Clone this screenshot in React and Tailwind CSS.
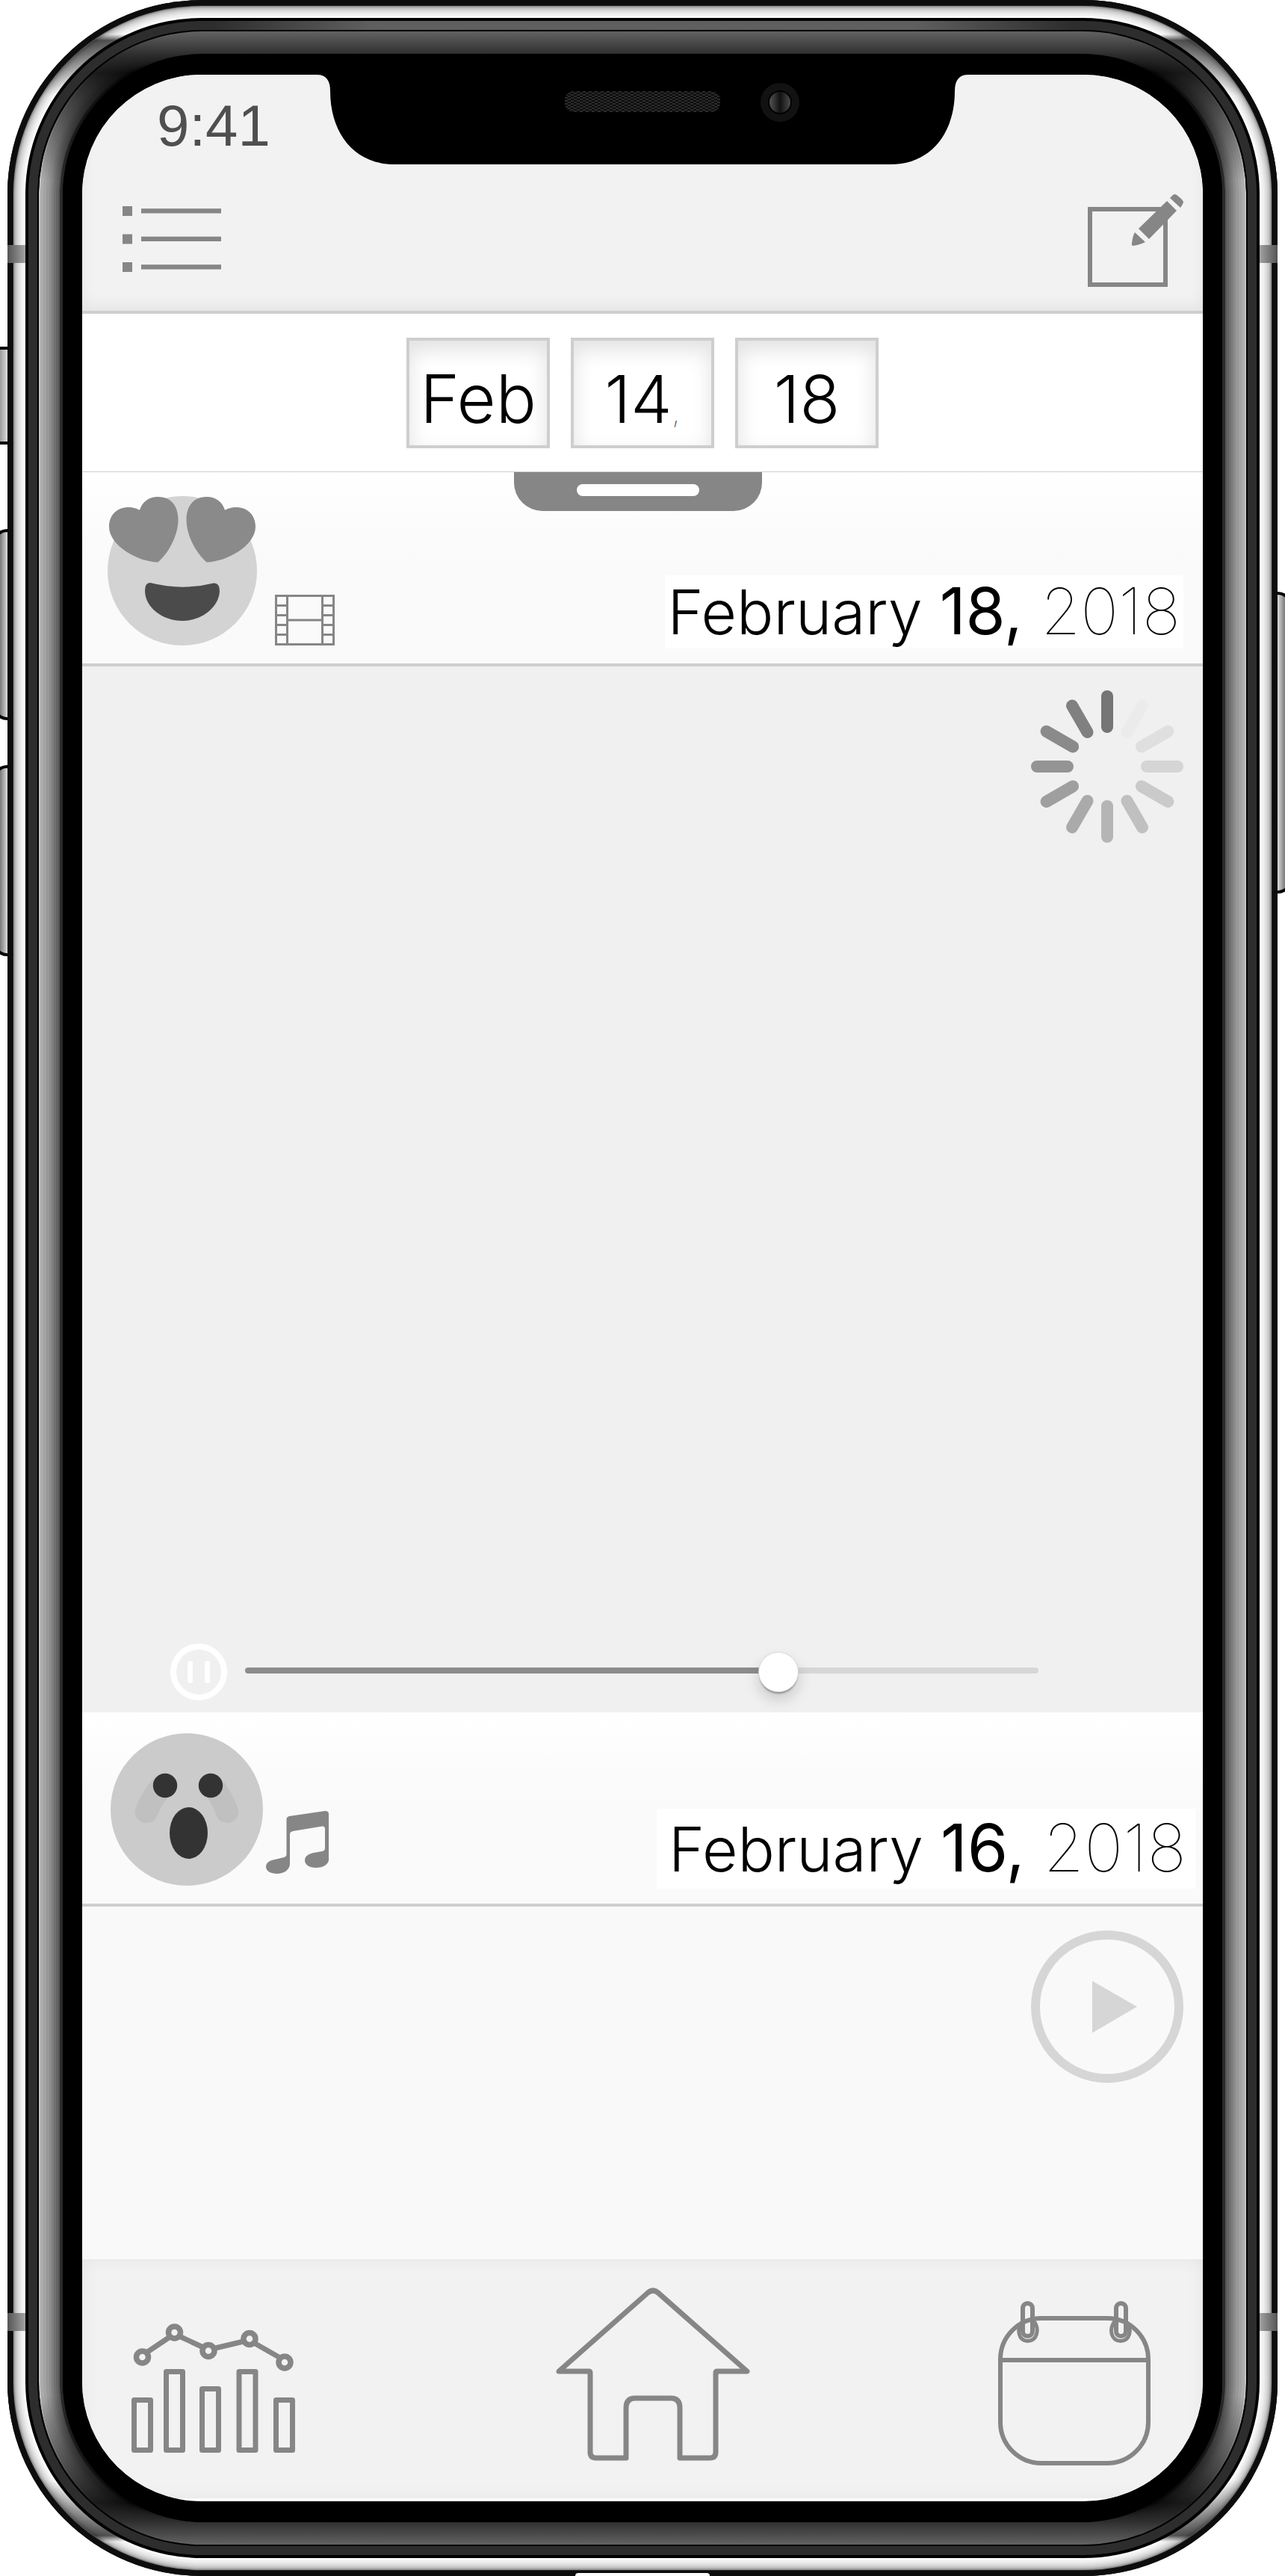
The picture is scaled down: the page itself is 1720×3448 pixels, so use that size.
const INK = "#868686";

function ListIcon() {
  return (
    <svg viewBox="0 0 132 88" className="block h-[88px] w-[132px]" fill={INK} aria-hidden="true">
      {[0, 37.5, 75].map((y) => (
        <g key={y}>
          <rect x="0" y={y} width="13" height="13" />
          <rect x="25" y={y + 3.2} width="107" height="6.3" />
        </g>
      ))}
    </svg>
  );
}

function ComposeIcon() {
  return (
    <svg viewBox="0 0 128 124" className="block h-[124px] w-[128px]" fill={INK} aria-hidden="true">
      <path d="M0 17H107V124H0ZM6 23V118H101V23Z" fillRule="evenodd" />
      <path d="M106 9L119 22L82 60L68 46Z" />
      <path d="M110 5L114 1Q116 -1 119 1Q126 6 128 10Q128 12 126 15L124 18Z" />
      <path d="M63 51L77 64Q72 67 61 69Q58 69 59 66Q60 56 63 51Z" />
    </svg>
  );
}

function HeartEyesFace() {
  return (
    <svg viewBox="0 0 200 200" className="block size-[200px]" role="img" aria-label="In love">
      <circle cx="100" cy="100" r="100" fill="#d3d3d3" />
      {["", "translate(200 0) scale(-1 1)"].map((t) => (
        <path
          key={t}
          transform={t}
          fill="#8a8a8a"
          d="M67.500 88.500C40 88 2 66 2 41C2 25 13 15 28 15C34 15 40 17 43 19C46 8 55 1 67.500 1C84 1 94.500 12 94.500 32C94.500 52 82 76 67.500 88.500Z"
        />
      ))}
      <path d="M57 116Q100 127 142 116.500Q150 116 150 127C149 149 126 167 100 167C74 167 50 149 50 127Q50 116 57 116Z" fill="#4b4b4b" />
    </svg>
  );
}

function ScaredFace() {
  return (
    <svg viewBox="0 0 204 204" className="block size-[204px]" role="img" aria-label="Scared">
      <circle cx="102" cy="102" r="102" fill="#cbcbcb" />
      <path d="M60 58Q42 76 33 102C31 112 39 120 48 120C55 120 60 116 62 111Q68 96 78 84Z" fill="#c0c0c0" />
      <path d="M147 60Q163 78 171 102C173 112 165 120 156 120C149 120 144 116 142 111Q137 96 128 84Z" fill="#c0c0c0" />
      <circle cx="73" cy="70" r="16.200" fill="#333" />
      <circle cx="134" cy="70" r="16.200" fill="#333" />
      <ellipse cx="104.500" cy="133.500" rx="25.500" ry="34.500" fill="#333" />
    </svg>
  );
}

function FilmIcon() {
  return (
    <svg viewBox="0 0 80 68" className="block h-[68px] w-[80px]" fill="none" stroke={INK} strokeWidth="3" role="img" aria-label="Video">
      <path d="M1.500 1.500H78.500V66.500H1.500ZM16.500 1V67M63.500 1V67M17 34H63" />
      {[14.5, 27.5, 40.5, 53.5].map((y) => (
        <path key={y} d={`M1 ${y}H16M64 ${y}H79`} />
      ))}
    </svg>
  );
}

function MusicIcon() {
  return (
    <svg viewBox="0 0 84 84" className="block size-[84px]" role="img" aria-label="Music">
      <path
        fill={INK}
        fillRule="evenodd"
        d="M31 7L79 0Q84 0 84 4V66C83 72 76 76 67 76C58 76 52 72 52 66C52 60 58 57 64 56L75 54Q79 53 79 50V24Q79 20 75 20.500L36 27Q32 28 32 31V72C31 79 24 84 15 84C6 84 0 80 0 75C0 69 5 66 12 65L24 62Q27.500 61 27.500 58V11Q27.500 8 31 7Z"
      />
    </svg>
  );
}

const SPOKES = ["#757575", "#ebebeb", "#dfdfdf", "#d5d5d5", "#cacaca", "#c0c0c0", "#b5b5b5", "#aaaaaa", "#9f9f9f", "#949494", "#8a8a8a", "#808080"];

function Spinner() {
  return (
    <svg viewBox="0 0 204 204" className="block size-[204px]" role="img" aria-label="Loading">
      {SPOKES.map((c, i) => (
        <rect key={c} x="94" y="0" width="16" height="57" rx="8" fill={c} transform={`rotate(${i * 30} 102 102)`} />
      ))}
    </svg>
  );
}

function PauseIcon() {
  return (
    <svg viewBox="0 0 76 76" className="block size-[76px]" aria-hidden="true">
      <circle cx="38" cy="38" r="34" fill="none" stroke="#fff" strokeWidth="8" />
      <rect x="23" y="23" width="7" height="30" rx="3.500" fill="#fff" />
      <rect x="46" y="23" width="7" height="30" rx="3.500" fill="#fff" />
    </svg>
  );
}

function PlayIcon() {
  return (
    <svg viewBox="0 0 204 204" className="block size-[204px]" aria-hidden="true">
      <circle cx="102" cy="102" r="96" fill="none" stroke="#d6d6d6" strokeWidth="12" />
      <path d="M82 67.500L142 102L82 137Z" fill="#d6d6d6" />
    </svg>
  );
}

function ChartIcon() {
  const bars = [
    [0, 99],
    [43, 61],
    [91, 84],
    [140.5, 61],
    [190, 99],
  ];
  const dots = [
    [14.5, 45],
    [57.5, 12],
    [103, 36.5],
    [158, 20.5],
    [205, 52],
  ];
  return (
    <svg viewBox="0 0 220 173" className="block h-[173px] w-[220px]" fill="none" stroke={INK} strokeWidth="7" aria-hidden="true">
      {bars.map(([x, y]) => (
        <rect key={x} x={x + 3.5} y={y + 3.5} width="22" height={166 - y} strokeLinejoin="round" />
      ))}
      {dots.map(([x, y]) => (
        <circle key={x} cx={x} cy={y} r="8" strokeWidth="7.500" />
      ))}
      <path d="M20 39L52 17.500M64 17L96 32M110 33.500L150 24M164 26L199 46" />
    </svg>
  );
}

function HomeIcon() {
  return (
    <svg viewBox="0 0 260 232" className="block h-[232px] w-[260px]" fill="none" stroke={INK} strokeWidth="7" strokeLinejoin="round" aria-hidden="true">
      <path d="M123 7Q130 1 137 7L256 112H216Q214 112 214 114V220Q214 228 206 228H166V161Q166 148 154 148H106Q94 148 94 161V228H54Q46 228 46 220V114Q46 112 44 112H4Z" />
    </svg>
  );
}

function CalendarIcon() {
  return (
    <svg viewBox="0 0 204 220" className="block h-[220px] w-[204px]" fill="none" stroke={INK} strokeWidth="6" aria-hidden="true">
      <rect x="3" y="23" width="198" height="194" rx="55" />
      <path d="M3 79H201" />
      <rect x="33" y="3" width="13" height="44" rx="6.500" />
      <rect x="158" y="3" width="13" height="44" rx="6.500" />
      <path d="M31 29C25 38 27 53 39.500 53.500C52 53 56 38 48 27" strokeWidth="5" />
      <path d="M156 27C148 38 151 53 164 53.500C177 53 179 38 173 29" strokeWidth="5" />
    </svg>
  );
}

/* Sensor housing with the ear speaker and the front camera. */
function Notch() {
  return (
    <svg viewBox="0 0 872 120" className="absolute top-0 left-1/2 h-[120px] w-[872px] -translate-x-1/2" aria-hidden="true">
      <defs>
        <pattern id="mesh" width="8" height="4" patternUnits="userSpaceOnUse">
          <rect width="8" height="4" fill="#0c0c0c" />
          <rect width="4" height="2" fill="#2b2b2b" />
          <rect x="4" y="2" width="4" height="2" fill="#2b2b2b" />
        </pattern>
        <linearGradient id="lens">
          <stop offset="0" stopColor="#555" />
          <stop offset=".5" stopColor="#111" />
          <stop offset="1" stopColor="#4a4a4a" />
        </linearGradient>
      </defs>
      <path d="M0 0C12 0 18 7 18 22C18 78 50 120 104 120H768C822 120 854 78 854 22C854 7 860 0 872 0Z" fill="#000" />
      <rect x="332" y="22" width="208" height="28" rx="12" fill="url(#mesh)" />
      <circle cx="620" cy="37" r="26" fill="#121212" />
      <circle cx="620" cy="37" r="16" fill="#000" />
      <circle cx="620" cy="37" r="14" fill="url(#lens)" />
    </svg>
  );
}

function DateBox({ label, className, children }) {
  return (
    <button
      type="button"
      aria-label={label}
      className={`flex h-[148px] w-48 items-center justify-center border-4 border-[#cecece] bg-white pt-4 leading-none font-light text-black shadow-[inset_0_12px_28px_rgba(0,0,0,0.12)] ${className}`}
    >
      {children}
    </button>
  );
}

function EntryHeader({ className, children }) {
  return (
    <header className={`flex h-[260px] shrink-0 items-end justify-between border-b-4 border-[#cecece] bg-linear-to-b from-white to-[#fafafa] to-45% ${className}`}>
      {children}
    </header>
  );
}

function EntryDate({ iso, day, year, className }) {
  return (
    <time dateTime={iso} className={`mb-5 bg-white whitespace-nowrap text-black ${className}`}>
      <span className="text-[82px] font-[350]">February </span>
      {day}, <span className="font-thin">{year}</span>
    </time>
  );
}

function SideButton({ className }) {
  return <div className={`absolute w-6 border-4 border-black ${className}`} />;
}

function Screen() {
  return (
    <div className="relative flex grow flex-col overflow-hidden rounded-[160px] bg-white pb-1">
      <header className="flex h-80 shrink-0 flex-col border-b-4 border-[#cecece] bg-[#f2f2f2] shadow-[inset_0_-6px_20px_rgba(0,0,0,0.06)]">
        <time className="pt-6 pl-[100px] font-['Liberation_Sans',sans-serif] text-[78px] leading-[88px] text-[#4f4f4f]">9:41</time>
        <div className="flex items-start justify-between pt-12 pr-[26px] pl-[54px]">
          <button type="button" aria-label="Menu" className="pt-4">
            <ListIcon />
          </button>
          <button type="button" aria-label="New entry">
            <ComposeIcon />
          </button>
        </div>
      </header>

      <section aria-label="Jump to date" className="flex h-[212px] shrink-0 justify-center gap-7 border-b border-[#cecece] pt-8">
        <DateBox label="Month" className="text-[90px]">
          Feb
        </DateBox>
        <DateBox label="Day" className="text-[88px]">
          <span>
            14<span className="text-[40px] font-thin">,</span>
          </span>
        </DateBox>
        <DateBox label="Year" className="text-[88px]">
          18
        </DateBox>
      </section>

      <main className="relative flex grow flex-col">
        <div className="absolute inset-x-0 top-0 flex justify-center pr-3">
          <button type="button" aria-label="Show more" className="flex h-[52px] w-[332px] justify-center rounded-b-[38px] bg-[#868686] pt-4">
            <span className="h-4 w-[164px] rounded-full bg-white" />
          </button>
        </div>

        <article className="flex grow flex-col">
          <EntryHeader className="pr-[26px] pl-[34px]">
            <div className="flex items-end gap-6 pb-6">
              <HeartEyesFace />
              <FilmIcon />
            </div>
            <EntryDate iso="2018-02-18" day="18" year="2018" className="pr-1 pl-1 text-[86px] leading-[96px]" />
          </EntryHeader>
          <div className="flex grow flex-col justify-between bg-[#f0f0f0] pt-8 pr-[26px] pb-4 pl-[118px]">
            <div className="self-end">
              <Spinner />
            </div>
            <div className="flex items-center gap-6 pr-[194px]">
              <button type="button" aria-label="Pause">
                <PauseIcon />
              </button>
              <input
                type="range"
                aria-label="Playback position"
                min="0"
                max="1000"
                defaultValue="681"
                className="mb-1 h-[52px] min-w-0 grow appearance-none bg-transparent [&::-webkit-slider-runnable-track]:h-2 [&::-webkit-slider-runnable-track]:rounded-full [&::-webkit-slider-runnable-track]:bg-[linear-gradient(to_right,#8c8c8c_68%,#d6d6d6_68%)] [&::-webkit-slider-thumb]:-mt-5 [&::-webkit-slider-thumb]:size-[52px] [&::-webkit-slider-thumb]:appearance-none [&::-webkit-slider-thumb]:rounded-full [&::-webkit-slider-thumb]:bg-white [&::-webkit-slider-thumb]:shadow-[0_0_0_1px_#d8d8d8,0_3px_2px_rgba(0,0,0,0.3),0_10px_20px_rgba(0,0,0,0.18)]"
              />
            </div>
          </div>
        </article>

        <article className="flex flex-col">
          <EntryHeader className="pr-[10px] pl-[38px]">
            <div className="flex items-end gap-1 pb-6">
              <ScaredFace />
              <div className="pb-4">
                <MusicIcon />
              </div>
            </div>
            <EntryDate iso="2018-02-16" day="16" year="2018" className="pr-3 pl-4 text-[88px] leading-[104px]" />
          </EntryHeader>
          <div className="flex h-[472px] items-start justify-end bg-[#f9f9f9] pt-8 pr-[26px]">
            <button type="button" aria-label="Play">
              <PlayIcon />
            </button>
          </div>
        </article>
      </main>

      <nav
        aria-label="Main"
        className="flex h-80 shrink-0 items-end justify-between bg-[#f2f2f2] pr-[70px] pl-[66px] shadow-[inset_0_0_24px_rgba(0,0,0,0.06)]"
      >
        <a href="#stats" aria-label="Statistics" className="pb-[61px]">
          <ChartIcon />
        </a>
        <a href="#home" aria-label="Home" className="pb-[50px] pl-4">
          <HomeIcon />
        </a>
        <a href="#calendar" aria-label="Calendar" className="pb-[44px]">
          <CalendarIcon />
        </a>
      </nav>

      <Notch />
    </div>
  );
}

export default function App() {
  return (
    <div className="relative flex min-h-screen flex-col overflow-hidden bg-white px-2.5 font-['Inter',sans-serif]">
      <SideButton className="top-[464px] -left-2.5 h-[131px] bg-linear-to-r from-[#777] to-[#ddd]" />
      <SideButton className="top-[708px] -left-2.5 h-64 rounded-l-[20px] bg-linear-to-r from-[#444] to-[#ddd]" />
      <SideButton className="top-[1024px] -left-2.5 h-64 rounded-l-[20px] bg-linear-to-r from-[#444] to-[#ddd]" />
      <SideButton className="top-[792px] -right-2.5 h-[404px] rounded-r-[20px] bg-linear-to-l from-[#444] to-[#ddd]" />

      {/* Polished outer band */}
      <div className="relative flex grow flex-col rounded-[260px] bg-white p-6 shadow-[inset_0_0_0_7px_#0d0d0d,inset_0_0_0_8px_#222,inset_0_0_0_10px_#999,inset_0_0_0_12px_#bdbdbd,inset_0_0_0_14px_#cfcfcf,inset_0_0_0_16px_#dcdcdc,inset_0_0_0_18px_#e6e6e6,inset_0_0_0_21px_#f0f0f0,inset_0_0_0_24px_#fbfbfb]">
        <div className="absolute inset-2 rounded-[252px] shadow-[inset_0_0_0_4px_rgba(60,60,60,0.55),inset_0_0_0_17px_rgba(50,50,50,0.85)] [mask-image:linear-gradient(to_bottom,transparent_38px,black_46px,transparent_120px,transparent_calc(100%-120px),black_calc(100%-46px),transparent_calc(100%-38px))]" />
        <div className="absolute inset-x-0 top-[328px] flex h-6 justify-between">
          <span className="w-[26px] bg-linear-to-r from-[#555] to-[#aaa]" />
          <span className="w-[26px] bg-linear-to-l from-[#555] to-[#aaa]" />
        </div>
        <div className="absolute inset-x-0 bottom-[328px] flex h-6 justify-between">
          <span className="w-[26px] bg-linear-to-r from-[#555] to-[#aaa]" />
          <span className="w-[26px] bg-linear-to-l from-[#555] to-[#aaa]" />
        </div>
        <div className="absolute bottom-0 left-1/2 h-1 w-[180px] -translate-x-1/2 rounded-t-sm bg-white" />

        <div className="relative flex grow flex-col rounded-[236px] bg-black p-1">
          <div className="flex grow flex-col rounded-[232px] bg-[#2d2d2d] bg-[linear-gradient(to_right,transparent_15%,#5f5f5f_28%,#5f5f5f_72%,transparent_85%)] bg-size-[100%_12px] bg-no-repeat p-3">
            <div className="flex grow flex-col rounded-[220px] bg-black p-0.5">
              <div className="relative flex grow flex-col overflow-hidden rounded-[218px] bg-[linear-gradient(to_bottom,#626262,#303030_30px,#000_56px,#000_calc(100%-56px),#303030_calc(100%-30px),#626262)] px-8 py-[30px]">
                <div className="absolute inset-0 rounded-[218px] shadow-[inset_0_0_0_2px_#c4c4c4,inset_0_0_0_6px_#acacac,inset_0_0_0_10px_#a3a3a3,inset_0_0_0_14px_#989898,inset_0_0_0_17px_#8c8c8c,inset_0_0_0_20px_#7e7e7e,inset_0_0_0_23px_#707070,inset_0_0_0_26px_#646464,inset_0_0_0_28px_#565656,inset_0_0_0_32px_#2a2a2a] [mask-image:linear-gradient(to_bottom,transparent_30px,black_200px,black_calc(100%-200px),transparent_calc(100%-30px))]" />
                <div className="relative flex grow flex-col rounded-[188px] bg-black px-[26px] py-7">
                  <Screen />
                </div>
              </div>
            </div>
          </div>
        </div>
      </div>
    </div>
  );
}
